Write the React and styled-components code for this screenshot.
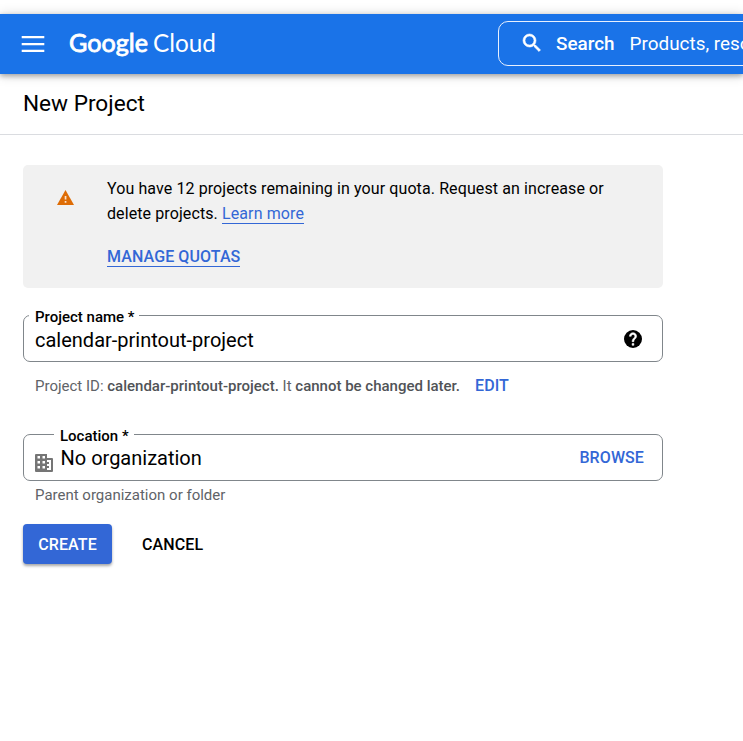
import React from "react";
import styled, { createGlobalStyle } from "styled-components";

const GlobalStyle = createGlobalStyle`
  *, *::before, *::after { box-sizing: border-box; }
  body {
    margin: 0;
    background: #fff;
    color: #000;
    font-family: Roboto, "Liberation Sans", sans-serif;
    overflow: hidden;
  }
`;

const Page = styled.div`
  height: 741px;
  padding-top: 14px;
  overflow: hidden;
`;

const TopBar = styled.header`
  display: flex;
  align-items: center;
  height: 60px;
  padding-left: 22px;
  background: #1a73e8;
  box-shadow: 0 2px 5px rgba(0, 0, 0, 0.3), 0 1px 12px rgba(0, 0, 0, 0.16);
  color: #fff;
`;

const MenuIcon = styled.svg`
  display: block;
  flex: none;
  width: 22px;
  height: 16px;
  overflow: visible;
`;

const Logo = styled.svg`
  display: block;
  flex: none;
  width: 150px;
  height: 40px;
  margin-left: 25px;
  font-family: Lato, sans-serif;
  font-size: 25px;
  fill: #fff;
`;

const SearchBox = styled.div`
  display: flex;
  align-items: center;
  flex: none;
  width: 420px;
  height: 45px;
  margin: 0 -180px 1px 279px;
  padding-left: 21px;
  border: 1px solid #e8f0fe;
  border-radius: 10px;
  font-size: 19px;
  white-space: nowrap;
`;

const SearchIcon = styled.svg`
  flex: none;
  width: 24px;
  height: 24px;
  margin-top: -2px;
  fill: #fff;
`;

const SearchLabel = styled.span`
  margin: 0 15px 0 12px;
  font-size: 18.9px;
  font-weight: 500;
`;

const SearchHint = styled.span`
  font-size: 18.9px;
`;

const TitleBar = styled.div`
  height: 61px;
  padding: 15px 23px 0;
  border-bottom: 1px solid #dadce0;
`;

const Title = styled.h1`
  margin: 0;
  font-size: 22.6px;
  line-height: 30px;
  font-weight: 400;
`;

const Content = styled.main`
  width: 663px;
  padding: 30px 0 0 23px;
`;

const Notice = styled.section`
  display: flex;
  height: 123px;
  padding: 11px 32px 0 34px;
  border-radius: 5px;
  background: #f1f1f1;
`;

const WarningIcon = styled.svg`
  flex: none;
  width: 17px;
  height: 15px;
  margin: 14px 33px 0 0;
  fill: #de6c05;
`;

const NoticeText = styled.p`
  margin: 0 0 21px;
  font-size: 16px;
  line-height: 25px;
  letter-spacing: 0.1px;
  white-space: nowrap;
`;

const Link = styled.a`
  display: inline-block;
  border-bottom: 1px solid #3367d6;
  color: #3367d6;
  font-size: 16px;
  font-weight: ${(p) => (p.$strong ? 500 : 400)};
  line-height: 19px;
  letter-spacing: 0.1px;
`;

const Outline = styled.fieldset`
  display: block;
  height: 57px;
  min-width: 0;
  margin: ${(p) => p.$top}px 0 0;
  padding: 0 18px 0 11px;
  border: 1px solid #80868b;
  border-radius: 7px;
`;

const Legend = styled.legend`
  height: 21px;
  margin-left: ${(p) => p.$indent}px;
  padding: 3px 5px 0 6px;
  font-size: 15px;
  line-height: 18px;
  font-weight: 500;
`;

const FieldBody = styled.div`
  display: flex;
  align-items: flex-start;
  height: 34px;
`;

const Value = styled.span`
  flex: 1;
  font-size: 20px;
  line-height: ${(p) => (p.$raised ? 26 : 28)}px;
`;

const HelpIcon = styled.svg`
  width: 18px;
  height: 18px;
  margin: 4px 2px 0 0;
`;

const BuildingIcon = styled.svg`
  width: 18px;
  height: 18px;
  margin: 9px 7.5px 0 0;
  fill: #757575;
`;

const Helper = styled.div`
  margin-top: ${(p) => p.$top}px;
  padding-left: 12px;
  color: #5f6368;
  font-size: 15px;
  line-height: 20px;
  white-space: nowrap;

  b { font-weight: 500; color: #505357; }
`;

const TextButton = styled.button`
  margin: ${(p) => p.$margin || "0"};
  padding: 0;
  border: 0;
  background: none;
  color: ${(p) => (p.$plain ? "#000" : "#3367d6")};
  font: 500 16px/20px Roboto, sans-serif;
  letter-spacing: 0.1px;
`;

const Actions = styled.div`
  display: flex;
  align-items: center;
  margin-top: 19px;
`;

const PrimaryButton = styled.button`
  width: 89px;
  height: 40px;
  padding: 1px 0 0;
  border: 0;
  border-radius: 4px;
  background: #3367d6;
  box-shadow: 0 2px 3px rgba(0, 0, 0, 0.35);
  color: #fff;
  font: 500 16px/20px Roboto, sans-serif;
  letter-spacing: 0.1px;
`;

export default function App() {
  return (
    <Page>
      <GlobalStyle />
      <TopBar>
        <MenuIcon viewBox="0 0 22 16">
          <path d="M-.3 1.2h22.6M-.3 8.1h22.6M-.3 14.9h22.6" stroke="#fff" strokeWidth="2.3" />
        </MenuIcon>
        <Logo viewBox="0 0 150 40" role="img" aria-label="Google Cloud">
          <text x="0" y="27.5" textLength="79" lengthAdjust="spacingAndGlyphs" fontWeight="400" stroke="#fff" strokeWidth=".8">Google</text>
          <text x="84" y="27.5" textLength="63" lengthAdjust="spacingAndGlyphs" fontWeight="400">Cloud</text>
        </Logo>
        <SearchBox>
          <SearchIcon viewBox="0 0 24 24">
            <path d="M15.5 14h-.79l-.28-.27A6.47 6.47 0 0 0 16 9.5 6.5 6.5 0 1 0 9.5 16c1.61 0 3.09-.59 4.23-1.57l.27.28v.79l5 4.99L20.49 19l-4.99-5zm-6 0C7.01 14 5 11.99 5 9.5S7.01 5 9.5 5 14 7.01 14 9.5 11.99 14 9.5 14z" stroke="#fff" strokeWidth=".6" />
          </SearchIcon>
          <SearchLabel>Search</SearchLabel>
          <SearchHint>Products, resources, docs (/)</SearchHint>
        </SearchBox>
      </TopBar>
      <TitleBar>
        <Title>New Project</Title>
      </TitleBar>
      <Content>
        <Notice>
          <WarningIcon viewBox="0 0 17 15">
            <path d="M0 15h17L8.5 0z" />
            <path d="M7.7 6h1.7v3.6H7.7zM7.7 11h1.7v1.8H7.7z" fill="#fbe3cc" />
          </WarningIcon>
          <div>
            <NoticeText>
              You have 12 projects remaining in your quota. Request an increase or<br />
              delete projects. <Link>Learn more</Link>
            </NoticeText>
            <Link $strong>MANAGE QUOTAS</Link>
          </div>
        </Notice>
        <Outline $top={17}>
          <Legend $indent={-6}>Project name *</Legend>
          <FieldBody>
            <Value>calendar-printout-project</Value>
            <HelpIcon viewBox="2 2 20 20">
              <circle cx="12" cy="12" r="10" />
              <path d="M13 19h-2v-2h2v2zm2.07-7.75-.9.92C13.45 12.9 13 13.5 13 15h-2v-.5c0-1.1.45-2.1 1.17-2.83l1.24-1.26c.37-.36.59-.86.59-1.41 0-1.1-.9-2-2-2s-2 .9-2 2H8c0-2.21 1.79-4 4-4s4 1.79 4 4c0 .88-.36 1.68-.93 2.25z" fill="#fff" stroke="#fff" strokeWidth=".6" />
            </HelpIcon>
          </FieldBody>
        </Outline>
        <Helper $top={14}>
          Project ID: <b>calendar-printout-project.</b> It <b>cannot be changed later.</b>
          <TextButton $margin="0 0 0 15px">EDIT</TextButton>
        </Helper>
        <Outline $top={28}>
          <Legend $indent={19}>Location *</Legend>
          <FieldBody>
            <BuildingIcon viewBox="0 0 18 18">
              <path fillRule="evenodd" d="M1 0h11v4h5a1 1 0 0 1 1 1v12a1 1 0 0 1-1 1H1a1 1 0 0 1-1-1V1a1 1 0 0 1 1-1zM2.5 2v2.5H5V2zM7.5 2v2.5H10V2zM2.5 7v2.5H5V7zM7.5 7v2.5H10V7zM2.5 12v2.5H5V12zM7.5 12v2.5H10V12zM12 6v2h2v2h-2v2h2v2h-2v2h4V6z" />
            </BuildingIcon>
            <Value $raised>No organization</Value>
            <TextButton $margin="3px 0 0">BROWSE</TextButton>
          </FieldBody>
        </Outline>
        <Helper $top={4}>Parent organization or folder</Helper>
        <Actions>
          <PrimaryButton>CREATE</PrimaryButton>
          <TextButton $plain $margin="1px 0 0 30px">CANCEL</TextButton>
        </Actions>
      </Content>
    </Page>
  );
}
